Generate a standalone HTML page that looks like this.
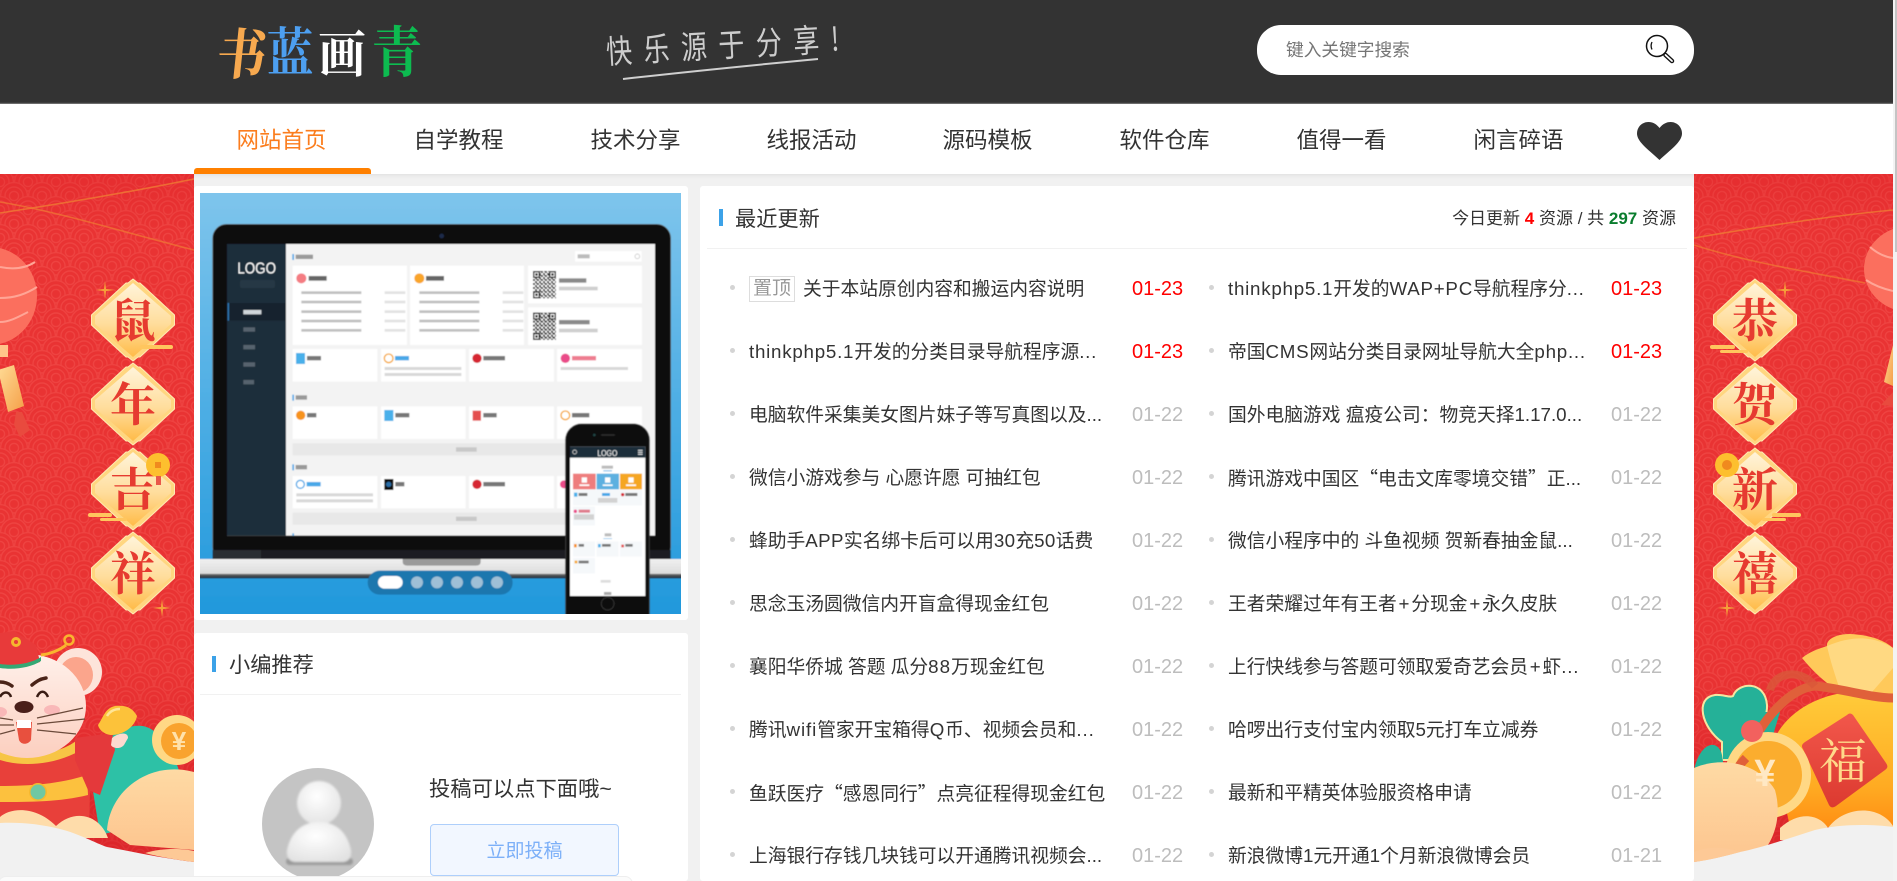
<!DOCTYPE html>
<html lang="zh-CN">
<head>
<meta charset="utf-8">
<title>书蓝画青</title>
<style>
*{margin:0;padding:0;box-sizing:border-box}
html,body{width:1897px;height:881px;overflow:hidden;background:#fff}
body{position:relative;font-family:"Liberation Sans","Noto Sans CJK SC",sans-serif;color:#333}
.a{position:absolute}
.top{left:0;top:0;width:1893px;height:104px;background:#333;box-shadow:inset 0 -2px 1px -1px #777}
.navbar{left:0;top:104px;width:1893px;height:70px;background:#fff}
.n{position:absolute;top:0;width:177px;height:70px;line-height:74px;text-align:center;font-size:22.5px;color:#333;margin-left:-1px}
.canvas{left:194px;top:174px;width:1500px;height:707px;background:#f1f1f1;box-shadow:inset 0 5px 4px -4px #ddd}
.card{background:#fff;border-radius:3px}
.bar{background:#3ca2e8;width:4px}
.t{white-space:nowrap;font-size:21.2px;line-height:30px;color:#333}
.r{position:absolute;height:30px;line-height:30px;white-space:nowrap;font-size:18.75px;color:#333;margin-top:1px}
.d{position:absolute;width:52px;height:30px;line-height:30px;font-size:20px;white-space:nowrap;color:#bdbdbd;margin-top:1px}
.red{color:#f00}
.b{position:absolute;width:5px;height:5px;border-radius:50%;background:#d4d4d4}
.c1{left:749px}.c2{left:1228px}.d1{left:1132px}.d2{left:1611px}
.b1{left:730px}.b2{left:1209px}
.l{letter-spacing:.75px}
.q{font-family:"Noto Sans CJK SC",sans-serif}
.p{padding:0 1.800px}
.lg{font-weight:700;font-family:"Noto Serif CJK SC",serif;font-size:50px;line-height:58px;height:58px;transform-origin:50% 50%}
</style>
</head>
<body>

<!-- side art -->
<svg class="a" style="left:0;top:174px" width="1893" height="707" viewBox="0 174 1893 707" xmlns="http://www.w3.org/2000/svg" font-family="'Noto Serif CJK SC','Liberation Serif',serif">
<defs>
<pattern id="sc" width="28" height="28" patternUnits="userSpaceOnUse">
<rect width="28" height="28" fill="#e93333"/>
<g fill="#e93333" stroke="#ee4341" stroke-width="1.400">
<g><circle cx="14" cy="0" r="13.400"/><circle cx="14" cy="0" r="9" fill="none"/><circle cx="14" cy="0" r="4.600" fill="none"/></g>
<g><circle cx="0" cy="14" r="13.400"/><circle cx="0" cy="14" r="9" fill="none"/><circle cx="0" cy="14" r="4.600" fill="none"/></g>
<g><circle cx="28" cy="14" r="13.400"/><circle cx="28" cy="14" r="9" fill="none"/><circle cx="28" cy="14" r="4.600" fill="none"/></g>
<g><circle cx="14" cy="28" r="13.400"/><circle cx="14" cy="28" r="9" fill="none"/><circle cx="14" cy="28" r="4.600" fill="none"/></g>
</g>
</pattern>
<linearGradient id="dim" x1="0" y1="0" x2="0" y2="1"><stop offset="0" stop-color="#fff4da"/><stop offset=".55" stop-color="#ffdd9c"/><stop offset="1" stop-color="#ffbb48"/></linearGradient>
<linearGradient id="vig" x1="0" y1="0" x2="0" y2="1"><stop offset="0" stop-color="#d91c24" stop-opacity=".25"/><stop offset=".08" stop-color="#d91c24" stop-opacity="0"/><stop offset=".7" stop-color="#d91c24" stop-opacity="0"/><stop offset=".88" stop-color="#c9141f" stop-opacity=".4"/></linearGradient>
<linearGradient id="tas" x1="0" y1="0" x2="1" y2="1"><stop offset="0" stop-color="#ffdc96"/><stop offset="1" stop-color="#f59f48"/></linearGradient>
<linearGradient id="bag" x1="0" y1="0" x2="0" y2="1"><stop offset="0" stop-color="#ffcb3a"/><stop offset=".7" stop-color="#ffab22"/><stop offset="1" stop-color="#ff8f14"/></linearGradient>
<linearGradient id="cl" x1="0" y1="0" x2="0" y2="1"><stop offset="0" stop-color="#fedaa4"/><stop offset="1" stop-color="#fdc58f"/></linearGradient>
<linearGradient id="fu" x1="0" y1="0" x2="0" y2="1"><stop offset="0" stop-color="#f2574b"/><stop offset="1" stop-color="#dc3a30"/></linearGradient>
<linearGradient id="sk" x1="0" y1="0" x2="0" y2="1"><stop offset="0" stop-color="#fff0ea"/><stop offset="1" stop-color="#fccfbf"/></linearGradient>
<g id="dm">
<path d="M0-41 5-37 7-37 41.500-5V5L7 37H5L0 41-5 37H-7L-41.500 5V-5L-7-37H-5Z" fill="#ffd680" stroke="#ffeab4" stroke-width="1"/>
<path d="M0-37 38-4V4L0 37-38 4V-4Z" fill="url(#dim)"/>
</g>
<g id="sp" fill="#f5a03a"><path d="M-9 0 0-1.200 9 0 0 1.200ZM0-9 1.200 0 0 9-1.200 0Z"/></g>
</defs>

<!-- backgrounds -->
<rect x="0" y="174" width="194" height="707" fill="url(#sc)"/>
<rect x="1694" y="174" width="199" height="707" fill="url(#sc)"/>
<rect x="0" y="174" width="194" height="707" fill="url(#vig)"/>
<rect x="1694" y="174" width="199" height="707" fill="url(#vig)"/>

<!-- LEFT strings / lantern -->
<path d="M0 213C60 204 130 192 194 179" fill="none" stroke="#ef7a33" stroke-width="1.600" opacity=".8"/>
<path d="M0 202C60 212 130 234 194 250" fill="none" stroke="#ef7a33" stroke-width="1.600" opacity=".7"/>
<ellipse cx="-10" cy="296" rx="47" ry="49" fill="#fb6f5e"/>
<path d="M0 267C15 270 26 268 35 262M0 298C15 298 26 294 37 287M0 322C10 322 20 316 28 312" fill="none" stroke="#ffa596" stroke-width="2"/>
<rect x="0" y="345" width="8" height="12" fill="#ffc58a"/>
<path d="M-2 370 14 365 24 406 8 412Z" fill="url(#tas)"/>
<path d="M16 412 22 412 30 430 20 437 14 425Z" fill="#e94a3e"/>

<!-- LEFT diamonds -->
<g transform="translate(133 320)"><use href="#dm"/><text y="17" text-anchor="middle" font-size="46" font-weight="700" fill="#e63b30">鼠</text></g>
<g transform="translate(133 404)"><use href="#dm"/><text y="17" text-anchor="middle" font-size="46" font-weight="700" fill="#e63b30">年</text></g>
<g transform="translate(133 489)"><use href="#dm"/><text y="17" text-anchor="middle" font-size="46" font-weight="700" fill="#e63b30">吉</text></g>
<g transform="translate(133 573)"><use href="#dm"/><text y="17" text-anchor="middle" font-size="46" font-weight="700" fill="#e63b30">祥</text></g>
<use href="#sp" x="105" y="290"/>
<use href="#sp" x="162" y="608"/>
<circle cx="158" cy="465" r="12" fill="#fdbf2e"/><rect x="155" y="462" width="6" height="6" fill="#f08a1e"/>
<rect x="156" y="476" width="5" height="9" fill="#e9584a"/>
<rect x="140" y="345" width="33" height="4" rx="2" fill="#ffc65e"/>
<rect x="88" y="513" width="24" height="4" rx="2" fill="#ffc65e"/><rect x="100" y="518" width="27" height="3" rx="1.500" fill="#ffc65e"/>

<!-- LEFT mouse -->
<path d="M88 760C120 720 150 715 165 745 182 765 185 790 182 815L100 835Z" fill="#2dc1a6"/>
<circle cx="177" cy="740" r="25" fill="#ffd885"/><circle cx="179" cy="741" r="18" fill="#f9a32e"/>
<text x="179" y="750" text-anchor="middle" font-size="26" font-weight="700" fill="#ffe2ac" font-family="'Liberation Sans',sans-serif">¥</text>
<path d="M0 753C20 760 60 760 78 745L90 790 89 830H0Z" fill="#e8403a"/>
<path d="M0 786C30 786 60 784 87 775L88 795C60 802 30 802 0 802Z" fill="#fcc13e"/>
<circle cx="38" cy="792" r="9" fill="#f5b82e"/><circle cx="38" cy="792" r="7.500" fill="#6fc8a2"/>
<path d="M0 746C25 760 60 755 80 738L84 748C60 764 25 768 0 760Z" fill="#f7c545"/>
<path d="M75 738 112 733 115 750 100 795 88 790 75 760Z" fill="#e4393b"/>
<circle cx="78" cy="672" r="24" fill="#fde4da"/><ellipse cx="76" cy="675" rx="17" ry="18" fill="#fba58c"/>
<ellipse cx="27" cy="706" rx="59" ry="52" fill="url(#sk)"/>
<path d="M0 633 14 631 36 645 40 662C28 666 10 668 0 668Z" fill="#e83a3a"/>
<path d="M0 664C14 666 30 664 41 657L41 661C30 668 14 670 0 668Z" fill="#35a874"/>
<circle cx="16" cy="642" r="5" fill="#f5b82e"/><circle cx="16" cy="642" r="2" fill="#e83a3a"/>
<path d="M41 655C50 654 60 650 66 645" fill="none" stroke="#f9b52e" stroke-width="3"/>
<circle cx="69" cy="640" r="4.500" fill="none" stroke="#f9b52e" stroke-width="2.500"/>
<path d="M32 685C37 681 40 679 46 678" fill="none" stroke="#4a2418" stroke-width="3.500" stroke-linecap="round"/>
<path d="M0 682C4 682 8 683 12 686" fill="none" stroke="#4a2418" stroke-width="3.500" stroke-linecap="round"/>
<path d="M37 697C40 690 45 690 48 697M0 697C3 691 9 691 11 697" fill="none" stroke="#3a1c14" stroke-width="2.500"/>
<ellipse cx="24" cy="707" rx="9.500" ry="6" fill="#4a1f1a"/>
<ellipse cx="52" cy="710" rx="8" ry="5" fill="#f9b8b8"/><ellipse cx="0" cy="712" rx="7" ry="5" fill="#f9b8b8"/>
<path d="M16 722H32L31 740C28 745 21 745 19 740Z" fill="#e8503e"/>
<rect x="17" y="720" width="14" height="8" fill="#fff"/>
<path d="M37 718 83 708M37 724 85 719M37 730 76 734M0 718 13 720M0 725 14 725M0 734 15 730" stroke="#6b4a3a" stroke-width="1.300" fill="none"/>
<path d="M112 738C118 733 128 731 128 738L124 745C120 750 112 748 111 745Z" fill="#fdd9cf"/>
<path d="M98 725C103 718 105 708 115 706 125 705 132 707 137 716 135 727 123 735 112 735 105 735 99 730 98 725Z" fill="#fcc23a"/>
<path d="M107 716C110 711 114 709 120 709" stroke="#ffe596" stroke-width="2.500" fill="none"/>
<path d="M107 830C110 790 150 760 194 772V850L130 845Z" fill="url(#cl)"/>
<path d="M0 817C10 808 35 805 56 826 75 808 100 815 108 838L0 838Z" fill="#fedcaa"/>
<path d="M0 823C20 822 40 824 60 829 80 834 95 843 107 847 130 851 160 858 194 862V881H0Z" fill="#f1f1f1"/>
<path d="M145 853C165 847 185 849 194 851V862C178 860 160 857 145 853Z" fill="#fdc996"/>

<!-- RIGHT strings / lantern -->
<path d="M1694 238C1770 225 1840 215 1893 210" fill="none" stroke="#ef7a33" stroke-width="1.600" opacity=".8"/>
<path d="M1694 245C1750 263 1810 272 1865 283" fill="none" stroke="#ef7a33" stroke-width="1.600" opacity=".7"/>
<ellipse cx="1910" cy="269" rx="46" ry="43" fill="#fb6f5e"/>
<path d="M1870 247C1878 254 1885 257 1893 258M1866 280C1875 286 1884 289 1893 291" fill="none" stroke="#ffa596" stroke-width="2"/>
<path d="M1893 345 1884 382 1893 386Z" fill="url(#tas)"/>
<path d="M1893 392 1881 405 1893 406Z" fill="#e94a3e"/>

<!-- RIGHT diamonds -->
<g transform="translate(1755 320)"><use href="#dm"/><text y="17" text-anchor="middle" font-size="46" font-weight="700" fill="#e63b30">恭</text></g>
<g transform="translate(1755 404)"><use href="#dm"/><text y="17" text-anchor="middle" font-size="46" font-weight="700" fill="#e63b30">贺</text></g>
<g transform="translate(1755 489)"><use href="#dm"/><text y="17" text-anchor="middle" font-size="46" font-weight="700" fill="#e63b30">新</text></g>
<g transform="translate(1755 573)"><use href="#dm"/><text y="17" text-anchor="middle" font-size="46" font-weight="700" fill="#e63b30">禧</text></g>
<use href="#sp" x="1785" y="290"/>
<use href="#sp" x="1727" y="608"/>
<circle cx="1727" cy="465" r="12" fill="#fdbf2e"/><circle cx="1727" cy="465" r="5" fill="#f08a1e"/>
<rect x="1710" y="345" width="25" height="4" rx="2" fill="#ffc65e"/><rect x="1720" y="350" width="28" height="3" rx="1.500" fill="#ffc65e"/>
<rect x="1772" y="513" width="29" height="4" rx="2" fill="#ffc65e"/><rect x="1762" y="518" width="24" height="3" rx="1.500" fill="#ffc65e"/>

<!-- RIGHT bag -->
<path d="M1722 742C1702 728 1694 698 1715 695 1722 694 1730 698 1733 696 1738 682 1765 680 1767 705 1768 722 1752 740 1745 760H1722Z" fill="#25b198" stroke="#f5e6a0" stroke-width="2"/>
<path d="M1740 712 1780 712 1770 745 1745 755Z" fill="#25b198"/>
<path d="M1694 770C1700 742 1718 738 1722 755L1725 775 1694 780Z" fill="#25b198"/>
<path d="M1802 658C1812 650 1822 648 1827 646 1826 640 1835 634 1850 634 1870 635 1884 640 1893 648V700H1860C1840 695 1820 680 1802 658Z" fill="#ffc95a"/>
<path d="M1827 646C1860 632 1880 640 1893 648V668L1872 692 1840 690C1835 675 1830 660 1827 646Z" fill="#ffd982"/>
<path d="M1772 745C1782 715 1815 695 1850 692L1893 697V827H1790Z" fill="url(#bag)"/>
<path d="M1745 760C1760 720 1790 688 1815 686 1840 688 1870 698 1893 698" fill="none" stroke="#e0603a" stroke-width="9"/>
<path d="M1770 690C1775 672 1800 668 1815 686" fill="none" stroke="#d9583a" stroke-width="8" opacity=".8"/>
<path d="M1847 715C1849 713 1851 713 1853 715L1886 763C1888 766 1888 768 1885 770L1836 806C1833 808 1831 808 1829 805L1803 749C1801 746 1802 744 1805 742Z" fill="url(#fu)"/>
<text x="1843" y="778" text-anchor="middle" font-size="48" fill="#ffd98a">福</text>
<circle cx="1768" cy="775" r="43" fill="#ffd885"/><circle cx="1768" cy="775" r="34" fill="#fbad2e"/>
<path d="M1746 758C1738 766 1735 770 1738 778" fill="none" stroke="#e0603a" stroke-width="9"/>
<circle cx="1752" cy="731" r="11" fill="#f2615e"/>
<path d="M1694 768C1725 755 1760 765 1775 790 1782 815 1775 840 1760 855L1694 862Z" fill="url(#cl)"/>
<text x="1765" y="786" text-anchor="middle" font-size="38" font-weight="700" fill="#ffe8c4" font-family="'Liberation Sans',sans-serif">¥</text>
<path d="M1780 828C1800 810 1820 815 1828 828 1845 805 1880 805 1893 826V840H1780Z" fill="#fedcaa"/>
<path d="M1893 827C1870 824 1840 824 1815 830 1790 838 1760 848 1740 852 1725 856 1710 860 1694 862V881H1893Z" fill="#f1f1f1"/>
<path d="M1694 852C1710 845 1730 848 1740 852 1725 856 1710 860 1694 862Z" fill="#fdc996"/>
</svg>

<div class="a canvas"></div>

<!-- header -->
<div class="a top"></div>
<div class="a lg" style="left:217px;top:22px;color:#f7a94f;transform:skewX(-6deg) scaleY(1.100)">书</div>
<div class="a lg" style="left:265px;top:20px;color:#4d9ff0;transform:scaleX(.92) scaleY(1.050)">蓝</div>
<div class="a lg" style="left:317px;top:22px;color:#fff;transform:scaleX(.95)">画</div>
<div class="a lg" style="left:372px;top:20px;color:#0dbb50;transform:scaleY(1.100)">青</div>
<div class="a" style="left:606px;top:31px;width:250px;height:40px;font:400 26px/40px 'Noto Sans CJK SC',sans-serif;color:#cdcdcd;white-space:nowrap;transform:rotate(-3.200deg) scaleY(1.250);transform-origin:0 50%;letter-spacing:11.500px">快乐源于分享!</div>
<svg class="a" style="left:615px;top:52px" width="210" height="34"><path d="M8 27C70 20 140 13 203 7" fill="none" stroke="#cfcfcf" stroke-width="2"/></svg>

<div class="a" style="left:1257px;top:25px;width:437px;height:50px;background:#fff;border-radius:24px"></div>
<div class="a" style="left:1286px;top:36px;font-size:17.700px;line-height:28px;color:#757575;white-space:nowrap">键入关键字搜索</div>
<svg class="a" style="left:1644px;top:32px" width="34" height="34" viewBox="0 0 34 34">
<circle cx="13" cy="14" r="10.500" fill="none" stroke="#111" stroke-width="1.500"/>
<path d="M8 10C6.800 12.500 6.800 15 8 17.500" fill="none" stroke="#111" stroke-width="1.300"/>
<path d="M21.500 23 28 29" stroke="#111" stroke-width="4.500" stroke-linecap="round"/>
<path d="M21.500 23 28 29" stroke="#fff" stroke-width="1.800" stroke-linecap="round"/>
</svg>

<!-- nav -->
<div class="a navbar">
<div class="n" style="left:194px;color:#fb7d1e">网站首页</div>
<div class="n" style="left:371px">自学教程</div>
<div class="n" style="left:548px">技术分享</div>
<div class="n" style="left:724px">线报活动</div>
<div class="n" style="left:900px">源码模板</div>
<div class="n" style="left:1077px">软件仓库</div>
<div class="n" style="left:1254px">值得一看</div>
<div class="n" style="left:1431px">闲言碎语</div>
</div>
<div class="a" style="left:194px;top:168px;width:177px;height:6px;background:#ff8000;border-radius:3px 3px 0 0"></div>
<svg class="a" style="left:1637px;top:122px" width="45" height="38" viewBox="0 0 45 38"><path d="M22.500 6C19 1.500 15 0 11.500 0 5 0 0 5 0 11.500 0 20 12 28 22.500 38 33 28 45 20 45 11.500 45 5 40 0 33.500 0 30 0 26 1.500 22.500 6Z" fill="#333"/></svg>

<!-- scrollbar -->
<div class="a" style="left:1893px;top:0;width:4px;height:881px;background:#f3f3f3"></div>
<div class="a" style="left:1895px;top:0;width:2px;height:252px;background:#c4c4c4"></div>

<!-- slide card -->
<div class="a card" style="left:194px;top:186px;width:494px;height:434px"></div>
<svg class="a" style="left:190px;top:180px" width="500" height="440" viewBox="0 0 1500 1320" font-family="'Liberation Sans','Noto Sans CJK SC',sans-serif">
<defs>
<clipPath id="sl"><rect x="30" y="39" width="1443" height="1263"/></clipPath>
<filter id="soft" x="0" y="0" width="100%" height="100%"><feGaussianBlur stdDeviation="1.200"/></filter>
<linearGradient id="sky" x1="0" y1="0" x2="0" y2="1"><stop offset="0" stop-color="#7fc5ec"/><stop offset=".5" stop-color="#4eaee4"/><stop offset="1" stop-color="#2098dc"/></linearGradient>
<linearGradient id="base" x1="0" y1="0" x2="0" y2="1"><stop offset="0" stop-color="#f0f0f0"/><stop offset=".75" stop-color="#dcdcdc"/><stop offset=".8" stop-color="#666"/><stop offset="1" stop-color="#1a2a3a"/></linearGradient>
<pattern id="qr" width="12" height="12" patternUnits="userSpaceOnUse"><rect width="12" height="12" fill="#fff"/><rect width="6" height="6" fill="#111"/><rect x="6" y="6" width="6" height="6" fill="#333"/><rect x="9" y="0" width="3" height="3" fill="#111"/></pattern>
<g id="qrc"><rect width="69" height="82" fill="url(#qr)"/><g fill="#fff" stroke="#111" stroke-width="4"><rect x="2" y="2" width="17" height="17"/><rect x="50" y="2" width="17" height="17"/><rect x="2" y="63" width="17" height="17"/></g><g fill="#111"><rect x="7" y="7" width="7" height="7"/><rect x="55" y="7" width="7" height="7"/><rect x="7" y="68" width="7" height="7"/></g></g>
<g id="ln"><rect width="180" height="8" fill="#c0c0c0"/><rect x="250" width="62" height="8" fill="#e2e2e2"/></g>
</defs>
<g clip-path="url(#sl)"><g filter="url(#soft)">
<rect x="20" y="30" width="1463" height="1285" fill="url(#sky)"/>
<rect x="68" y="133" width="1374" height="1010" rx="42" fill="#0c0c0c" stroke="#666" stroke-width="2"/>
<circle cx="755" cy="168" r="7" fill="#1c2a4a"/>
<rect x="111" y="192" width="1284" height="875" fill="#f3f3f3"/>
<rect x="111" y="192" width="177" height="875" fill="#1e2e3a"/>
<text x="142" y="280" textLength="116" lengthAdjust="spacingAndGlyphs" font-size="48" fill="#fff">LOGO</text>
<rect x="150" y="300" width="105" height="24" rx="6" fill="#263845"/>
<rect x="113" y="369" width="175" height="53" fill="#17232d"/><rect x="113" y="369" width="4" height="53" fill="#2e78b8"/>
<rect x="160" y="390" width="54" height="13" fill="#d0d6da"/>
<g fill="#56646e"><rect x="160" y="442" width="35" height="13"/><rect x="160" y="495" width="35" height="13"/><rect x="160" y="547" width="35" height="13"/><rect x="160" y="600" width="32" height="13"/></g>
<rect x="307" y="222" width="5" height="18" fill="#4aa8e8"/><rect x="317" y="224" width="52" height="13" fill="#9a9a9a"/>
<rect x="1155" y="213" width="200" height="32" fill="#fff"/><rect x="1163" y="223" width="36" height="12" fill="#bbb"/>
<circle cx="1342" cy="229" r="7" fill="none" stroke="#bbb" stroke-width="2"/>
<g fill="#fff">
<rect x="308" y="257" width="343" height="238"/><rect x="660" y="257" width="342" height="238"/>
<rect x="1014" y="257" width="342" height="113"/><rect x="1014" y="382" width="342" height="113"/>
<rect x="308" y="507" width="254" height="98"/><rect x="573" y="507" width="254" height="98"/><rect x="837" y="507" width="255" height="98"/><rect x="1101" y="507" width="255" height="98"/>
<rect x="308" y="679" width="254" height="98"/><rect x="573" y="679" width="254" height="98"/><rect x="837" y="679" width="255" height="98"/><rect x="1101" y="679" width="255" height="98"/>
<rect x="308" y="888" width="254" height="97"/><rect x="573" y="888" width="254" height="97"/><rect x="837" y="888" width="255" height="97"/><rect x="1101" y="888" width="255" height="97"/>
</g>
<circle cx="334" cy="295" r="15" fill="#f47b82"/><rect x="356" y="288" width="54" height="14" fill="#666"/>
<circle cx="688" cy="295" r="15" fill="#f9a52b"/><rect x="708" y="288" width="54" height="14" fill="#666"/>
<g transform="translate(334 334)"><use href="#ln"/><use href="#ln" y="28"/><use href="#ln" y="57"/><use href="#ln" y="85"/><use href="#ln" y="113"/></g>
<g transform="translate(688 334)"><use href="#ln"/><use href="#ln" y="28"/><use href="#ln" y="57"/><use href="#ln" y="85"/><use href="#ln" y="113"/></g>
<use href="#qrc" x="1029" y="273"/><use href="#qrc" x="1029" y="398"/>
<g fill="#8a8a8a"><rect x="1107" y="295" width="82" height="13"/><rect x="1107" y="420" width="92" height="13"/></g>
<g fill="#cfcfcf"><rect x="1107" y="320" width="116" height="11"/><rect x="1107" y="446" width="116" height="11"/></g>
<rect x="318" y="519" width="27" height="33" fill="#4ab0ea"/><rect x="351" y="528" width="42" height="13" fill="#777"/>
<circle cx="596" cy="535" r="13" fill="#fff" stroke="#f5a623" stroke-width="4"/><rect x="615" y="528" width="42" height="13" fill="#48a8e8"/>
<rect x="584" y="561" width="230" height="9" fill="#d8d8d8"/><rect x="584" y="579" width="230" height="9" fill="#d8d8d8"/>
<circle cx="861" cy="535" r="14" fill="#d62830"/><rect x="880" y="528" width="65" height="13" fill="#777"/>
<circle cx="1126" cy="535" r="14" fill="#ea4c89"/><rect x="1146" y="528" width="72" height="13" fill="#ee7d90"/>
<rect x="1112" y="561" width="202" height="9" fill="#d8d8d8"/>
<rect x="307" y="644" width="5" height="18" fill="#4aa8e8"/><rect x="317" y="646" width="34" height="13" fill="#999"/>
<circle cx="332" cy="706" r="14" fill="#f7931e"/><rect x="351" y="699" width="28" height="13" fill="#777"/>
<rect x="583" y="690" width="27" height="33" fill="#4ab0ea"/><rect x="616" y="699" width="42" height="13" fill="#777"/>
<rect x="848" y="692" width="25" height="30" fill="#e45050"/><rect x="880" y="699" width="40" height="13" fill="#777"/>
<circle cx="1126" cy="706" r="13" fill="#fff" stroke="#f5a623" stroke-width="4"/><rect x="1146" y="699" width="52" height="13" fill="#777"/>
<rect x="308" y="790" width="830" height="36" fill="#e8e8e8"/><rect x="798" y="802" width="62" height="13" fill="#c8c8c8"/>
<rect x="307" y="853" width="5" height="18" fill="#4aa8e8"/><rect x="317" y="855" width="34" height="13" fill="#999"/>
<circle cx="331" cy="913" r="12" fill="#fff" stroke="#4aa8e8" stroke-width="4"/><rect x="350" y="906" width="42" height="13" fill="#48a8e8"/>
<rect x="319" y="940" width="230" height="9" fill="#d8d8d8"/><rect x="319" y="958" width="230" height="9" fill="#d8d8d8"/>
<rect x="583" y="897" width="27" height="33" fill="#111"/><circle cx="596" cy="913" r="8" fill="#2a6ea8"/><rect x="616" y="906" width="27" height="13" fill="#777"/>
<circle cx="861" cy="913" r="14" fill="#d62830"/><rect x="880" y="906" width="65" height="13" fill="#777"/>
<circle cx="1122" cy="913" r="12" fill="#ea4c89"/>
<rect x="308" y="998" width="830" height="36" fill="#e8e8e8"/><rect x="798" y="1010" width="62" height="13" fill="#c8c8c8"/>
<rect x="307" y="1060" width="5" height="7" fill="#4aa8e8"/>
<rect x="68" y="1110" width="1374" height="27" fill="#1b1d20"/><rect x="68" y="1110" width="145" height="27" fill="#2a2d32"/>
<rect x="20" y="1137" width="1463" height="58" fill="url(#base)"/>
<path d="M638 1137H872V1145Q872 1157 858 1157H652Q638 1157 638 1145Z" fill="#9a9a9a"/>
<rect x="533" y="1172" width="435" height="72" rx="36" fill="#1c77ae"/>
<rect x="564" y="1188" width="74" height="38" rx="19" fill="#fff"/>
<g fill="#9fbfd6"><circle cx="681" cy="1207" r="18"/><circle cx="741" cy="1207" r="18"/><circle cx="801" cy="1207" r="18"/><circle cx="861" cy="1207" r="18"/><circle cx="921" cy="1207" r="18"/></g>
<rect x="1127" y="732" width="251" height="640" rx="48" fill="#0a0a0a" stroke="#3a3a3a" stroke-width="3"/>
<circle cx="1213" cy="765" r="4" fill="#244"/><rect x="1233" y="763" width="42" height="4" rx="2" fill="#333"/>
<rect x="1140" y="800" width="226" height="448" fill="#fff"/>
<rect x="1140" y="800" width="226" height="33" fill="#1e2e3a"/>
<text x="1222" y="828" textLength="60" lengthAdjust="spacingAndGlyphs" font-size="26" fill="#fff">LOGO</text>
<circle cx="1154" cy="816" r="6" fill="none" stroke="#ddd" stroke-width="2"/>
<path d="M1344 811H1358M1344 817H1358M1344 823H1358" stroke="#fff" stroke-width="2.500"/>
<rect x="1235" y="857" width="34" height="9" fill="#bbb"/><rect x="1240" y="871" width="26" height="3" fill="#6ab4e8"/>
<rect x="1149" y="881" width="68" height="47" fill="#ee7d7d"/><rect x="1220" y="881" width="67" height="47" fill="#5bb0e0"/><rect x="1290" y="881" width="66" height="47" fill="#f5a623"/>
<g fill="#fff"><rect x="1175" y="892" width="16" height="16"/><rect x="1245" y="892" width="16" height="16"/><rect x="1315" y="892" width="16" height="16"/><rect x="1168" y="913" width="30" height="5"/><rect x="1238" y="913" width="30" height="5"/><rect x="1308" y="913" width="30" height="5"/></g>
<rect x="1149" y="930" width="207" height="46" fill="#f5f8fa"/>
<rect x="1152" y="938" width="10" height="12" fill="#4ab0ea"/><rect x="1166" y="939" width="26" height="9" fill="#777"/>
<rect x="1236" y="939" width="24" height="9" fill="#4aa8e8"/><rect x="1224" y="954" width="58" height="14" fill="#d2d2d2"/>
<circle cx="1298" cy="944" r="5" fill="#d62830"/><rect x="1306" y="939" width="36" height="9" fill="#777"/>
<rect x="1149" y="980" width="66" height="56" fill="#f5f8fa"/>
<circle cx="1156" cy="994" r="5" fill="#ea4c89"/><rect x="1166" y="989" width="34" height="9" fill="#e07a8a"/><rect x="1152" y="1003" width="60" height="16" fill="#d2d2d2"/>
<rect x="1244" y="1060" width="20" height="9" fill="#bbb"/><rect x="1240" y="1075" width="26" height="2" fill="#6ab4e8"/>
<rect x="1149" y="1084" width="66" height="46" fill="#f5f8fa"/><rect x="1220" y="1084" width="66" height="46" fill="#f5f8fa"/><rect x="1290" y="1084" width="66" height="46" fill="#f5f8fa"/>
<rect x="1152" y="1092" width="8" height="10" fill="#f7931e"/><rect x="1166" y="1092" width="16" height="8" fill="#777"/>
<rect x="1224" y="1092" width="8" height="10" fill="#4ab0ea"/><rect x="1236" y="1092" width="26" height="8" fill="#777"/>
<rect x="1294" y="1094" width="8" height="8" fill="#e45050"/><rect x="1306" y="1092" width="22" height="8" fill="#777"/>
<rect x="1149" y="1134" width="66" height="46" fill="#f5f8fa"/><rect x="1154" y="1142" width="8" height="8" fill="#f5a623"/><rect x="1166" y="1142" width="30" height="8" fill="#777"/>
<rect x="1232" y="1200" width="30" height="8" fill="#ddd"/><rect x="1242" y="1236" width="22" height="9" fill="#aaa"/>
<circle cx="1253" cy="1271" r="19" fill="none" stroke="#333" stroke-width="3"/>
</g></g>
</svg>

<!-- recommend card -->
<div class="a card" style="left:194px;top:633px;width:494px;height:248px"></div>
<div class="a bar" style="left:212px;top:656px;height:16px"></div>
<div class="a t" style="left:229px;top:651px">小编推荐</div>
<div class="a" style="left:200px;top:694px;width:481px;height:1px;background:#f1f1f1"></div>
<svg class="a" style="left:262px;top:768px" width="112" height="112" viewBox="0 0 112 112">
<defs><filter id="bl"><feGaussianBlur stdDeviation="1"/></filter>
<radialGradient id="hd" cx=".45" cy=".35" r=".7"><stop offset="0" stop-color="#fff"/><stop offset="1" stop-color="#e2e2e2"/></radialGradient></defs>
<circle cx="56" cy="56" r="56" fill="#c4c4c4"/>
<g filter="url(#bl)"><rect x="24" y="90" width="67" height="7" rx="3.500" fill="#999"/>
<circle cx="57" cy="35" r="22" fill="url(#hd)"/>
<path d="M57 54C40 54 29 64 25 82 24 90 28 94 34 94H80C86 94 90 90 89 82 85 64 74 54 57 54Z" fill="url(#hd)"/></g>
</svg>
<div class="a" style="left:429px;top:774px;font-size:21.300px;line-height:30px;color:#333;white-space:nowrap">投稿可以点下面哦~</div>
<div class="a" style="left:430px;top:824px;width:189px;height:52px;border:1px solid #aecffb;border-radius:4px;background:#f2f7ff;color:#7db0f8;font-size:19px;line-height:54px;text-align:center">立即投稿</div>
<div class="a" style="left:-2px;top:876px;width:635px;height:20px;background:#fbfbfb;border:1px solid #eee;border-radius:8px"></div>

<!-- updates card -->
<div class="a card" style="left:700px;top:186px;width:994px;height:695px"></div>
<div class="a bar" style="left:719px;top:209px;height:17px"></div>
<div class="a t" style="left:735px;top:205px">最近更新</div>
<div class="a" style="left:1300px;top:204px;width:376px;text-align:right;font-size:17px;line-height:30px;white-space:nowrap;color:#333">今日更新 <b style="color:#f00">4</b> 资源 / 共 <b style="color:#0a7d2e">297</b> 资源</div>
<div class="a" style="left:707px;top:248px;width:980px;height:1px;background:#f1f1f1"></div>

<div class="a" style="left:749px;top:276px;width:46px;height:26px;border:1px solid #ddd;color:#999;font-size:19px;line-height:24px;text-align:center;white-space:nowrap">置顶</div>

<i class="b b1" style="top:285px"></i><div class="r" style="left:803px;top:273px">关于本站原创内容和搬运内容说明</div><div class="d d1 red" style="top:273px">01-23</div>
<i class="b b2" style="top:285px"></i><div class="r c2" style="top:273px"><span class="l">thinkphp5.1</span>开发的<span class="l">WAP+PC</span>导航程序分<span class="l">...</span></div><div class="d d2 red" style="top:273px">01-23</div>

<i class="b b1" style="top:348px"></i><div class="r c1" style="top:336px"><span class="l">thinkphp5.1</span>开发的分类目录导航程序源<span class="l">...</span></div><div class="d d1 red" style="top:336px">01-23</div>
<i class="b b2" style="top:348px"></i><div class="r c2" style="top:336px">帝国<span class="l">CMS</span>网站分类目录网址导航大全<span class="l">php...</span></div><div class="d d2 red" style="top:336px">01-23</div>

<i class="b b1" style="top:411px"></i><div class="r c1" style="top:399px">电脑软件采集美女图片妹子等写真图以及...</div><div class="d d1" style="top:399px">01-22</div>
<i class="b b2" style="top:411px"></i><div class="r c2" style="top:399px">国外电脑游戏 瘟疫公司：物竞天择1.17.0...</div><div class="d d2" style="top:399px">01-22</div>

<i class="b b1" style="top:474px"></i><div class="r c1" style="top:462px">微信小游戏参与 心愿许愿 可抽红包</div><div class="d d1" style="top:462px">01-22</div>
<i class="b b2" style="top:474px"></i><div class="r c2" style="top:462px">腾讯游戏中国区<span class="q">“</span>电击文库零境交错<span class="q">”</span>正...</div><div class="d d2" style="top:462px">01-22</div>

<i class="b b1" style="top:537px"></i><div class="r c1" style="top:525px">蜂助手<span style="letter-spacing:.35px">APP</span>实名绑卡后可以用<span style="letter-spacing:.35px">30</span>充<span style="letter-spacing:.35px">50</span>话费</div><div class="d d1" style="top:525px">01-22</div>
<i class="b b2" style="top:537px"></i><div class="r c2" style="top:525px">微信小程序中的 斗鱼视频 贺新春抽金鼠...</div><div class="d d2" style="top:525px">01-22</div>

<i class="b b1" style="top:600px"></i><div class="r c1" style="top:588px">思念玉汤圆微信内开盲盒得现金红包</div><div class="d d1" style="top:588px">01-22</div>
<i class="b b2" style="top:600px"></i><div class="r c2" style="top:588px">王者荣耀过年有王者<span class="p">+</span>分现金<span class="p">+</span>永久皮肤</div><div class="d d2" style="top:588px">01-22</div>

<i class="b b1" style="top:663px"></i><div class="r c1" style="top:651px">襄阳华侨城 答题 瓜分<span style="letter-spacing:1px">88</span>万现金红包</div><div class="d d1" style="top:651px">01-22</div>
<i class="b b2" style="top:663px"></i><div class="r c2" style="top:651px">上行快线参与答题可领取爱奇艺会员<span class="p">+</span>虾<span class="l">...</span></div><div class="d d2" style="top:651px">01-22</div>

<i class="b b1" style="top:726px"></i><div class="r c1" style="top:714px">腾讯<span style="letter-spacing:.9px">wifi</span>管家开宝箱得<span style="letter-spacing:.9px">Q</span>币、视频会员和<span style="letter-spacing:.9px">...</span></div><div class="d d1" style="top:714px">01-22</div>
<i class="b b2" style="top:726px"></i><div class="r c2" style="top:714px">哈啰出行支付宝内领取5元打车立减券</div><div class="d d2" style="top:714px">01-22</div>

<i class="b b1" style="top:789px"></i><div class="r c1" style="top:777px">鱼跃医疗<span class="q">“</span>感恩同行<span class="q">”</span>点亮征程得现金红包</div><div class="d d1" style="top:777px">01-22</div>
<i class="b b2" style="top:789px"></i><div class="r c2" style="top:777px">最新和平精英体验服资格申请</div><div class="d d2" style="top:777px">01-22</div>

<i class="b b1" style="top:852px"></i><div class="r c1" style="top:840px">上海银行存钱几块钱可以开通腾讯视频会...</div><div class="d d1" style="top:840px">01-22</div>
<i class="b b2" style="top:852px"></i><div class="r c2" style="top:840px">新浪微博1元开通1个月新浪微博会员</div><div class="d d2" style="top:840px">01-21</div>

</body>
</html>
